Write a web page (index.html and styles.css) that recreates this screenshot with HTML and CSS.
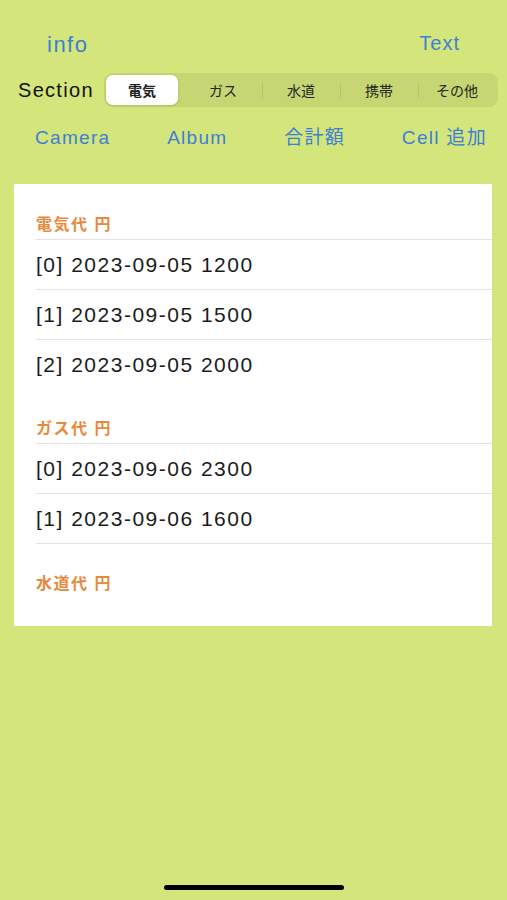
FILE: index.html
```html
<!DOCTYPE html>
<html lang="ja">
<head>
<meta charset="utf-8">
<title>Bills</title>
<link rel="stylesheet" href="styles.css">
</head>
<body>
<div class="screen">
  <div class="topbar">
    <span class="link info">info</span>
    <span class="link text-btn">Text</span>
  </div>
  <div class="section-row">
    <span class="section-label">Section</span>
    <div class="segmented">
      <div class="seg selected">電気</div>
      <div class="seg">ガス</div>
      <div class="seg divided">水道</div>
      <div class="seg divided">携帯</div>
      <div class="seg divided">その他</div>
    </div>
  </div>
  <div class="actions">
    <span class="link">Camera</span>
    <span class="link">Album</span>
    <span class="link">合計額</span>
    <span class="link">Cell 追加</span>
  </div>
  <div class="card">
    <div class="group first">
      <div class="group-head">電気代 円</div>
      <div class="row">[0] 2023-09-05 1200</div>
      <div class="row">[1] 2023-09-05 1500</div>
      <div class="row last">[2] 2023-09-05 2000</div>
    </div>
    <div class="group">
      <div class="group-head">ガス代 円</div>
      <div class="row">[0] 2023-09-06 2300</div>
      <div class="row">[1] 2023-09-06 1600</div>
    </div>
    <div class="group">
      <div class="group-head plain">水道代 円</div>
    </div>
  </div>
  <div class="home-indicator"></div>
</div>
</body>
</html>
```
FILE: styles.css
```css
* { box-sizing: border-box; }
html, body {
  margin: 0;
  padding: 0;
  background: #d4e57b;
}
body {
  font-family: "Liberation Sans", "Noto Sans CJK JP", sans-serif;
  color: #1b1b1b;
}
.screen {
  width: 507px;
  height: 900px;
  display: flex;
  flex-direction: column;
  position: relative;
}
.link {
  color: #3c7fd6;
  font-size: 19px;
  letter-spacing: 1.3px;
  white-space: nowrap;
}
.topbar {
  display: flex;
  justify-content: space-between;
  padding: 32px 47px 0 47px;
  height: 60px;
}
.topbar .link {
  font-size: 22px;
  line-height: 26px;
}
.topbar .info { letter-spacing: 1.5px; }
.topbar .text-btn { font-size: 20px; line-height: 22px; letter-spacing: 1px; }
.section-row {
  display: flex;
  align-items: center;
  height: 34px;
  margin-top: 13px;
  padding-left: 18px;
}
.section-label {
  font-size: 20px;
  letter-spacing: 1.3px;
  color: #111;
  width: 86px;
}
.segmented {
  display: flex;
  width: 394px;
  height: 34px;
  padding: 2px;
  border-radius: 9px;
  background: #c6d672;
}
.seg {
  flex: 1;
  display: flex;
  align-items: center;
  justify-content: center;
  font-size: 14px;
  color: #222;
  position: relative;
}
.seg.selected {
  flex: 0 0 72px;
  margin-right: 6px;
  background: #ffffff;
  border-radius: 7px;
  font-weight: bold;
  box-shadow: 0 1px 3px rgba(0,0,0,0.12);
}
.seg.divided::before {
  content: "";
  position: absolute;
  left: 0;
  top: 7px;
  bottom: 7px;
  width: 1px;
  background: #b6c56a;
}
.actions {
  display: flex;
  justify-content: space-between;
  padding: 0 20px 0 35px;
  margin-top: 19px;
  line-height: 24px;
}
.card {
  margin: 34px 15px 0 14px;
  background: #ffffff;
  padding-top: 2px;
  padding-bottom: 28px;
}
.group-head {
  margin-left: 22px;
  height: 54px;
  display: flex;
  align-items: flex-end;
  padding-bottom: 4px;
  border-bottom: 1px solid #e4e4e4;
  color: #e8893c;
  font-size: 16px;
  font-weight: bold;
  letter-spacing: 1.5px;
}
.group-head.plain { border-bottom: none; }
.row {
  margin-left: 22px;
  height: 50px;
  display: flex;
  align-items: center;
  font-size: 21px;
  letter-spacing: 1.5px;
  border-bottom: 1px solid #e4e4e4;
  color: #1b1b1b;
}
.row.last { border-bottom: none; }
.home-indicator {
  position: absolute;
  left: 164px;
  top: 885px;
  width: 180px;
  height: 5px;
  border-radius: 3px;
  background: #000;
}
```
